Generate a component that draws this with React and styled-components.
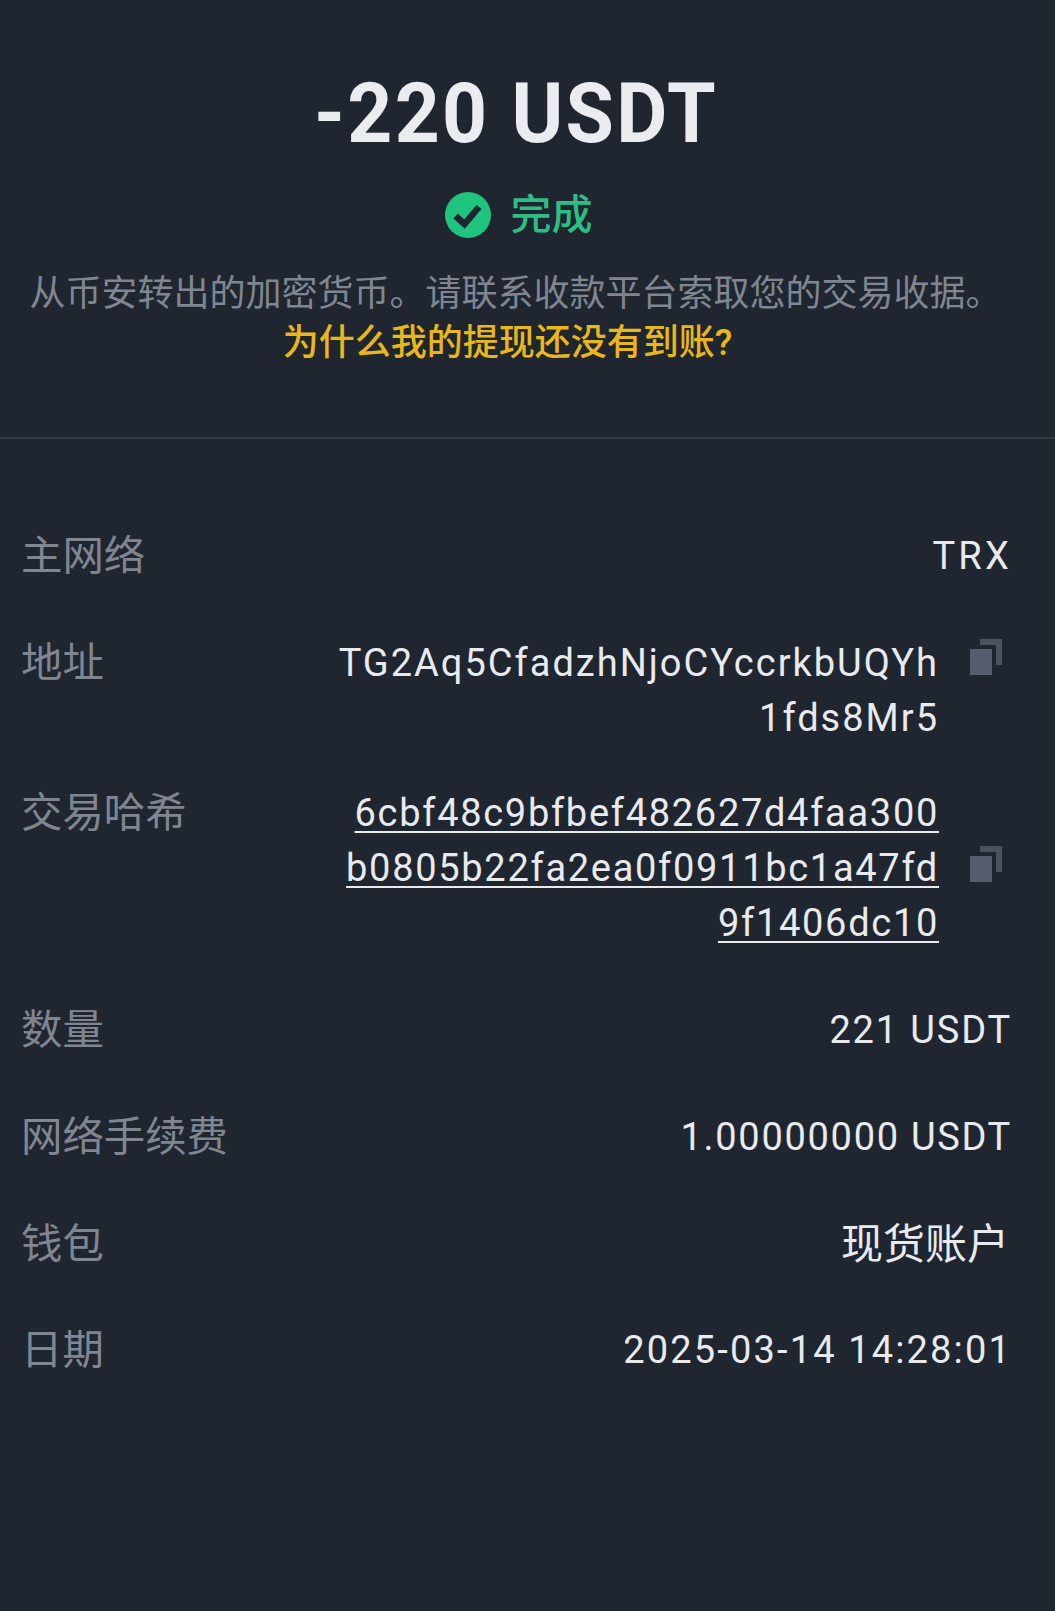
import React from "react";
import styled, { createGlobalStyle } from "styled-components";

const Global = createGlobalStyle`
  html, body { margin: 0; padding: 0; background: #1f2630; }
`;
const FONT = `Roboto, "Noto Sans CJK SC", sans-serif`;

const Page = styled.div`
  width: 1055px;
  height: 1611px;
  overflow: hidden;
  background: #1f2630;
  font-family: ${FONT};
`;
const Header = styled.header`
  height: 437px;
  border-bottom: 2px solid #343b49;
  display: flex;
  flex-direction: column;
  align-items: center;
`;
const Amount = styled.h1`
  margin: 66px 0 0;
  font-size: 84px;
  line-height: 96px;
  font-weight: 700;
  color: #eaecef;
  letter-spacing: 2.5px;
  white-space: nowrap;
  transform: translateX(-11px) scaleX(0.935);
`;
const Status = styled.div`
  margin-top: 27px;
  display: flex;
  align-items: center;
  gap: 20px;
  color: #2ebd85;
  font-size: 41px;
  line-height: 52px;
  font-weight: 500;
  transform: translateX(-9px);
`;
const Notice = styled.p`
  margin: 29px 0 0;
  font-size: 36px;
  line-height: 49px;
  color: #808691;
  white-space: nowrap;
  transform: translateX(-12px);
`;
const Help = styled.a`
  font-size: 36px;
  line-height: 49px;
  font-weight: 500;
  color: #e8b71c;
  transform: translateX(-20px);
`;
const List = styled.main`
  padding: 90px 45px 0 21px;
  display: flex;
  flex-direction: column;
`;
const Row = styled.div`
  display: flex;
  justify-content: space-between;
  align-items: flex-start;
  margin-bottom: ${(p) => (p.$tight ? 40 : 51.9)}px;
`;
const Label = styled.div`
  font-size: 41.4px;
  line-height: 55px;
  color: #808691;
  white-space: nowrap;
`;
const Value = styled.div`
  font-size: ${(p) => (p.$cjk ? 42 : 38)}px;
  line-height: 55px;
  letter-spacing: ${(p) => p.$spacing ?? 1.85}px;
  margin-right: ${(p) => (p.$cjk ? 1 : -2)}px;
  color: #e8eaed;
  text-align: right;
  white-space: nowrap;
`;
const Copyable = styled.div`
  display: flex;
  align-items: center;
  gap: 31px;
  margin-right: 8px;
`;
const Lines = styled.div`
  display: flex;
  flex-direction: column;
  align-items: flex-end;
  font-size: 38px;
  line-height: 55px;
  letter-spacing: ${(p) => p.$spacing}px;
  color: #e8eaed;
  white-space: nowrap;
`;
const LinkLine = styled.a`
  display: block;
  text-decoration: underline;
  text-underline-offset: 5px;
  text-decoration-thickness: 2px;
`;
const CopyWrap = styled.span`
  display: flex;
  width: 32px;
  height: 36px;
  align-self: ${(p) => (p.$top ? "flex-start" : "center")};
  margin-top: ${(p) => (p.$top ? 3 : -8)}px;
`;

const CopyIcon = ({ top }) => (
  <CopyWrap $top={top}>
    <svg width="32" height="36" viewBox="0 0 32 36">
      <path d="M10 0h22v26h-6V6H10z" fill="#4b535f" />
      <rect x="0" y="10" width="22" height="26" fill="#555e6d" />
    </svg>
  </CopyWrap>
);

const CheckIcon = () => (
  <svg width="46" height="46" viewBox="0 0 46 46">
    <circle cx="23" cy="23" r="23" fill="#1fc47f" />
    <path d="M10.5 24 L19.5 32 L34 15" fill="none" stroke="#1f2630" strokeWidth="6.5" />
  </svg>
);

export default function App() {
  return (
    <Page>
      <Global />
      <Header>
        <Amount>-220 USDT</Amount>
        <Status>
          <CheckIcon />
          <span>完成</span>
        </Status>
        <Notice>从币安转出的加密货币。请联系收款平台索取您的交易收据。</Notice>
        <Help>为什么我的提现还没有到账?</Help>
      </Header>
      <List>
        <Row>
          <Label>主网络</Label>
          <Value $spacing={3.2}>TRX</Value>
        </Row>
        <Row $tight>
          <Label>地址</Label>
          <Copyable>
            <Lines $spacing={2}>
              <span>TG2Aq5CfadzhNjoCYccrkbUQYh</span>
              <span>1fds8Mr5</span>
            </Lines>
            <CopyIcon top />
          </Copyable>
        </Row>
        <Row>
          <Label>交易哈希</Label>
          <Copyable>
            <Lines $spacing={1.7}>
              <LinkLine>6cbf48c9bfbef482627d4faa300</LinkLine>
              <LinkLine>b0805b22fa2ea0f0911bc1a47fd</LinkLine>
              <LinkLine>9f1406dc10</LinkLine>
            </Lines>
            <CopyIcon />
          </Copyable>
        </Row>
        <Row>
          <Label>数量</Label>
          <Value>221 USDT</Value>
        </Row>
        <Row>
          <Label>网络手续费</Label>
          <Value $spacing={1.7}>1.00000000 USDT</Value>
        </Row>
        <Row>
          <Label>钱包</Label>
          <Value $cjk $spacing={0}>现货账户</Value>
        </Row>
        <Row>
          <Label>日期</Label>
          <Value $spacing={2.15}>2025-03-14 14:28:01</Value>
        </Row>
      </List>
    </Page>
  );
}
